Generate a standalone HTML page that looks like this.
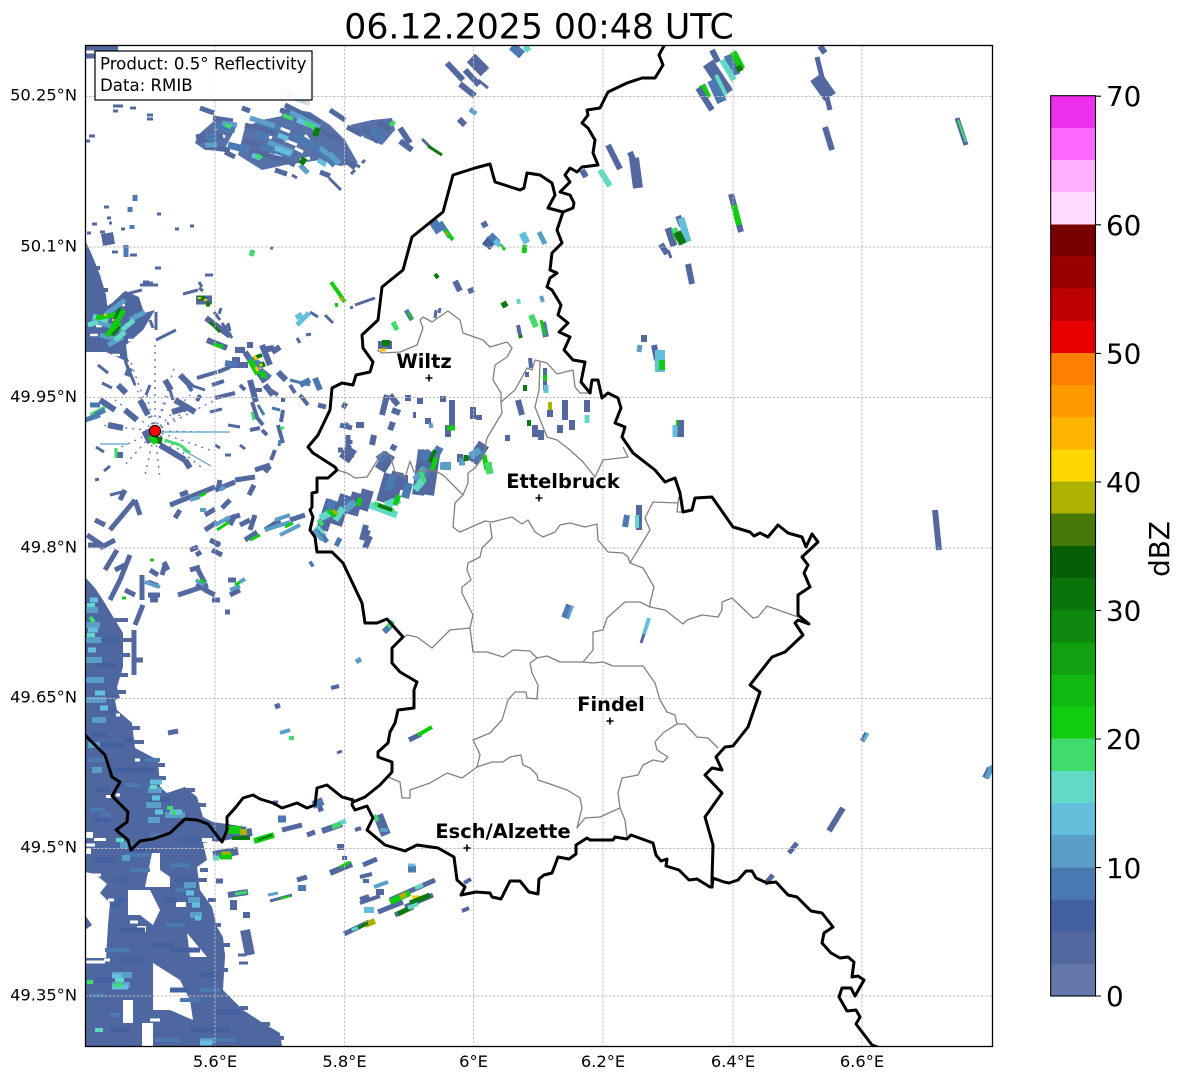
<!DOCTYPE html>
<html><head><meta charset="utf-8"><style>
html,body{margin:0;padding:0;background:#fff}
svg{display:block}
text{font-family:"DejaVu Sans","Liberation Sans",sans-serif;fill:#000}
.r path{fill:none;stroke-linecap:butt}
.a{stroke:#52689f}.b{stroke:#4360a0}.c{stroke:#4b7ab3}.d{stroke:#5b9fc8}.e{stroke:#64bfdc}.f{stroke:#62d9c6}.g{stroke:#3fdb6b}.h{stroke:#11cc11}.i{stroke:#0a7a0a}.y{stroke:#adb200}.z{stroke:#ffc800}.w{stroke:#fff}
</style></head><body>
<svg width="1184" height="1081" viewBox="0 0 1184 1081" xmlns="http://www.w3.org/2000/svg">
<rect width="1184" height="1081" fill="#fff"/>
<text x="539" y="38.5" font-size="34.7" text-anchor="middle">06.12.2025 00:48 UTC</text>
<clipPath id="cp"><rect x="85.5" y="45.5" width="907" height="1001"/></clipPath>
<g clip-path="url(#cp)">
<!-- SW mass -->
<polygon fill="#4f67a0" points="85,577 95,588 103,600 112,615 123,633 123,667 117,687 120,698 115,700 117,710 132,723 135,748 158,760 160,787 167,793 185,787 197,797 203,817 213,822 247,827 240,837 220,840 203,843 207,860 197,867 200,890 212,907 217,927 223,937 225,957 223,990 243,1010 263,1023 280,1033 282,1046 85,1046"/>
<polygon fill="#4f67a0" points="85,240 92,255 100,275 106,295 108,312 85,330"/>
<!-- holes -->
<g fill="#fff">
<polygon points="85,872 95,874 107,884 100,893 110,903 108,925 106,958 85,958 85,930 92,925 85,915"/>
<polygon points="128,890 150,890 160,910 153,925 140,915 128,915"/>
<polygon points="152,853 160,853 160,870 170,877 170,887 145,887"/>
<polygon points="187,933 207,957 190,957"/>
<polygon points="153,963 180,980 190,1000 193,1020 170,1010 153,1010"/>
<rect x="142" y="1023" width="11" height="23"/>
<rect x="123" y="1000" width="10" height="23"/>
<rect x="85" y="832" width="8" height="6"/><rect x="94" y="838" width="12" height="3"/><rect x="85" y="848" width="6" height="6"/>
<rect x="106" y="795" width="8" height="3"/>
<rect x="202" y="838" width="10" height="4"/>
<rect x="176" y="902" width="10" height="5"/><rect x="137" y="926" width="9" height="6"/>
</g>
<g class="r">
<!-- jagged stair edges -->
<path class="a" stroke-width="4" d="M112 620h16M118 640h14M118 655h12M116 675h12M112 692h14M132 728h8M134 742h10M155 765h10M158 778h8M165 796h-10M183 790h12M196 805h10M210 826h20M240 832h12M200 870h8M197 880h10M208 900h8M215 925h6M222 945h8M222 970h6M240 1008h8M260 1024h10M278 1038h6M95 1046h6M92 268h8M100 290h8M102 305h-6"/>
<path class="w" stroke-width="3" d="M85 875h16M85 845h10M108 900h6M150 898h-6M130 922h8M176 925h6M110 960h-6M85 962h20M150 1020h10M120 795h-4M140 760h-5M120 715h-4"/>
<!-- SW texture -->
<path class="b" stroke-width="5" d="M100 745h25M110 770h20M95 790h15M130 770h25M150 800h20M95 860h20M115 880h12M175 880h20M120 930h25M150 945h25M95 980h20M200 975h20M110 1030h20M190 1030h40M215 1012h25M170 950h30M120 960h22M165 900h12M95 820h15M180 840h20M130 850h15M92 735h15M105 710h10M125 740h8M96 665h20M103 640h15M170 990h18M118 900h8M110 905h12"/>
<path class="c" stroke-width="4" d="M88 760h20M100 815h10M145 760h15M90 810h15M125 855h25M150 835h15M165 925h20M200 990h20M180 1000h20M110 1015h10M105 950h25M205 1040h30M170 865h20M175 890h15M150 870h-20M125 785h15M90 995h15M155 1040h25"/>
<path class="d" stroke-width="6" d="M86 610h12M86 625h14M86 640h15M86 660h16M86 680h18M86 700h20M92 720h14M88 745h12M92 770h10M120 845h12M122 858h8M148 790h14M146 805h15M148 820h12M184 885h12M188 900h12M190 915h12M112 975h20M112 985h18M200 1041h14M165 815h20"/>
<path class="e" stroke-width="5" d="M90 600h8M88 630h10M88 650h8M95 693h10M100 708h8M150 782h12M152 798h8M155 812h8M192 905h8M195 918h6M112 987h16M186 893h8M170 812h12M112 976h10M200 1043h12"/>
<path class="f" stroke-width="4" d="M87 605h8M87 635h8M116 840h8M150 787h7M115 980h9M95 1030h8"/>
<path class="g" stroke-width="4" d="M90 617l4 5M167 808h6M114 985h8M172 813h4M87 982h6"/>
</g>
<!-- NW top cluster bases -->
<polygon fill="#5672a8" points="198,135 215,120 236,125 232,135 224,150 205,150 195,143"/>
<polygon fill="#5672a8" points="282,108 310,112 330,125 345,140 358,163 340,166 320,160 285,165 262,170 238,155 245,127 262,120 282,116"/>
<polygon fill="#5672a8" points="350,125 372,120 392,118 395,130 382,145 365,138"/>
<g class="r">
<path class="w" stroke-width="3" d="M262 134l10 4M280 128l10 4M285 140l12 5M295 148l8 4M270 152l12 3M305 135l4 5M345 128l5 3M225 137l-4-2M300 160l10-2M215 128h8"/>
<path class="a" stroke-width="5" d="M85 48h33M85 56h10M200 108l14 5M242 108l8 3M213 118l20 3M196 137l15-3M198 141l25-5M205 147l25 3M225 152l10 5M245 125l30 8M245 140l30 12M250 150l40 12M280 110l40 12M285 105l30 15M310 125l30 15M345 160l10 8M330 110l15 10M347 127l15 8M363 128l15 14M378 122l12 8M285 160l10 5M275 170l12 4M320 172l10 4"/>
<path class="c" stroke-width="7" d="M215 125l20 5M228 145l20 5M260 145l30 10M295 135l25 15M260 122l20 8M320 150l15 15M255 133l14 4M372 130l10 10M205 135l12 5"/>
<path class="d" stroke-width="5" d="M222 123l15 2M250 118l25 8M268 142l25 10M290 112l30 15M320 148l20 15M330 153l8 10M300 165l8 8M205 145h12"/>
<path class="e" stroke-width="5" d="M275 148l16 6M297 120l20 8M278 135l10 4M252 155l8 3M318 160l8 5"/>
<path class="g" stroke-width="4" d="M283 115l10 4M305 122l15 10M225 125l6 2M390 125l5-3M256 155l6 3"/>
<path class="i" stroke-width="6" d="M318 128l-3 8M305 158l-4 6"/>
<path class="a" stroke-width="3" d="M329 178l12 12M276 171l10 4M292 175l5 3M321 172l6 3M352 163l8 4M355 170l-4 4M365 160l-3 3M113 106h10M113 111h5M130 108h6M147 115h6M147 119h6M89 136h6M85 141h5M104 207h5M157 214h4M107 218h4M109 223h3M92 224h5M121 229h4M175 229h4M190 226h4M87 233h4M100 232h5M112 252h6M130 255h7M155 268h6M270 248h3"/>
<path class="c" stroke-width="5" d="M135 195v6M130 207v5M132 225v4M126 245v12"/>
<path class="a" stroke-width="12" d="M102 240l12-2"/>
<path class="g" stroke-width="5" d="M253 250l-2 6"/>
</g>
<!-- W cluster -->
<polygon fill="#4f67a0" points="85,320 112,303 125,291 139,297 144,313 155,310 143,330 126,345 128,362 106,352 85,352"/>
<g class="r">
<path class="w" stroke-width="2.5" d="M90 335h8M112 355h8M128 340h5M100 345h6M135 315h4M96 326h6M122 305h3M108 300h3"/>
<path class="a" stroke-width="3" d="M122 295l20-5M140 285h18M143 282h6M127 365l8 20M98 365l10 8M150 320l3 8M156 312v18M102 383l10 5M90 345h20M120 350l8 12M125 360l5 15M156 340l20-10"/>
<path class="d" stroke-width="5" d="M92 320l30 10M100 335l20 5M125 300l-20 15M130 320l15-8M108 345l15-8"/>
<path class="f" stroke-width="5" d="M93 316l15 5M122 330l12-10M115 340l10-8M88 325l10-3"/>
<path class="h" stroke-width="5" d="M96 318l24-4M110 332l14-22M120 322l-14 14"/>
<path class="i" stroke-width="3" d="M115 318l5-10M112 335l8-8"/>
<path class="z" stroke-width="2" d="M104 315h3M112 320h2"/>
<!-- spots NW -->
<path class="a" stroke-width="3" d="M183 294l15-4M145 283h8M205 275h8M202 287l-3-5M221 308l-2 6M228 323l2 8M222 323l10 15M228 325l-4 5M199 288l4 3M214 312l6 8M297 338l3 5M306 335l5-1M355 305l20-7M325 315l8 8M310 312l8 5M350 308l3-1"/>
<path class="a" stroke-width="9" d="M196 300h16"/>
<path class="i" stroke-width="5" d="M198 298h7M206 304h4"/>
<path class="z" stroke-width="2" d="M198 298h3M204 300h3"/>
<path class="a" stroke-width="6" d="M206 318l24 18M207 340l20 8M235 350h10M262 350l12-2M247 345h6"/>
<path class="i" stroke-width="3" d="M210 322l10 10"/>
<path class="h" stroke-width="4" d="M331 282l14 20M213 344l10 3M335 305h3"/>
<path class="y" stroke-width="3" d="M340 297l3 4"/>
<path class="e" stroke-width="5" d="M297 325l12-12M296 318l6-4"/>
<path class="g" stroke-width="5" d="M393 322l4 8"/>
<path class="a" stroke-width="8" d="M378 345h14"/>
<path class="i" stroke-width="6" d="M382 343h8"/>
<path class="z" stroke-width="3" d="M380 350h6"/>
<!-- centre-left cluster -->
<path class="a" stroke-width="6" d="M228 365l20 0M245 352l20 30M262 345l8 20M250 380l6 22M265 385l8 10M278 372l8 8M232 360l8 0M272 352l8-5"/>
<path class="c" stroke-width="6" d="M248 358l15 8M260 370l10 8M225 363l12 2M300 385l10-5M315 378l5 12"/>
<path class="h" stroke-width="6" d="M250 360l8 14M262 372l2 6"/>
<path class="i" stroke-width="4" d="M254 358l8-3M262 362l2 5"/>
<path class="z" stroke-width="3" d="M254 356l3 4M260 364l2 2M256 367l2 4"/>
<path class="a" stroke-width="4" d="M212 385l12-4M250 390l12 0M270 390l8 5M240 385l5 5M252 402l5 15M255 415l8 10M283 410l-2 12M278 425l5 18M262 430l5 5M290 385l5 8M300 395l8 10M285 400h-4M275 450l-4 10M250 430l10-2M215 398l20-5M200 395l-3 6M197 378l20-6M218 372l12-5M188 385l4 6"/>
<path class="c" stroke-width="3" d="M290 380l20 5M258 405l6 10M280 440l-1 6M272 408l8 2"/>
<path class="g" stroke-width="3" d="M280 428h4M252 412l2 8"/>
<!-- zone left of band -->
<path class="a" stroke-width="5" d="M343 408l3-5M340 425l12 3M348 435v14M345 450h3M350 445l-3 4M348 455h6M343 450h-5M318 405l8 2M350 440v4"/>
<path class="c" stroke-width="4" d="M345 428l3-5M342 452l8 3"/>
<!-- right cells -->
<path class="a" stroke-width="6" d="M390 395l8 10M392 410l8 3M405 398h6M420 398v6M413 415h3M443 396v6M452 400v30M448 425v12M428 418v6M473 407v12M479 415v5M518 400l4 15M565 400v20M560 425v8M572 420v10M587 400v12M550 410v7M505 438h5M535 425v12M541 430v10"/>
<path class="a" stroke-width="6" d="M447 63l16 17M465 70l14 15M460 84l15 12M400 128l10 15M400 141l12 9M608 145l12 24M582 170l4 7M630 152l4 10M731 194l10 38M661 244l6 10M678 216l4 10M688 264l4 20M825 127l7 23M820 46l5 7M455 281l5 10M470 288l2 5M644 335v7M654 345l3 15M483 222l3 5"/>
<path class="a" stroke-width="12" d="M471 58l14 14"/>
<path class="a" stroke-width="3" d="M478 80l10 8M422 139l10 10M668 250l3 8M436 310l-1 8M440 308l-1 5"/>
<path class="a" stroke-width="14" d="M816 77l14 20"/>
<path class="a" stroke-width="5" d="M817 57l13 53"/>
<path class="a" stroke-width="10" d="M634 158l4 30"/>
<path class="i" stroke-width="3" d="M428 146l14 9"/>
<path class="d" stroke-width="5" d="M470 109l6 5M429 426l4-1M539 232l6 12"/>
<path class="a" stroke-width="6" d="M459 119l6 6"/>
<path class="c" stroke-width="9" d="M512 46l10 9M432 220l8 12M728 55l8 20"/>
<path class="f" stroke-width="6" d="M525 46l4 5M600 170l10 16M722 60l12 20"/>
<path class="h" stroke-width="7" d="M733 52l9 17M702 85l6 13"/>
<path class="a" stroke-width="6" d="M712 50l6 12M698 88l14 22"/>
<path class="a" stroke-width="12" d="M708 63l20 30"/>
<path class="c" stroke-width="10" d="M712 80l10 22"/>
<path class="f" stroke-width="4" d="M716 75l10 20"/>
<path class="i" stroke-width="6" d="M738 66l3 5"/>
<path class="h" stroke-width="6" d="M734 205l5 20"/>
<path class="e" stroke-width="7" d="M681 218l7 24"/>
<path class="a" stroke-width="7" d="M668 228l6 18"/>
<path class="g" stroke-width="6" d="M674 228l4 12"/>
<path class="i" stroke-width="8" d="M677 232l6 12"/>
<path class="c" stroke-width="5" d="M440 222l10 15"/>
<path class="h" stroke-width="4" d="M445 230l8 10"/>
<path class="y" stroke-width="2" d="M446 232l2 3"/>
<path class="b" stroke-width="10" d="M485 240l8 6"/>
<path class="c" stroke-width="7" d="M490 235l8 8"/>
<path class="e" stroke-width="5" d="M495 240l5 6"/>
<path class="h" stroke-width="3" d="M501 245l4 5"/>
<path class="e" stroke-width="7" d="M522 233l5 10"/>
<path class="h" stroke-width="5" d="M525 245l-1 8"/>
<path class="i" stroke-width="4" d="M435 274l3 4"/>
<path class="i" stroke-width="6" d="M503 302l3 5"/>
<path class="f" stroke-width="4" d="M518 299l1 5"/>
<path class="d" stroke-width="4" d="M541 296l2 6"/>
<path class="g" stroke-width="6" d="M531 315l5 12"/>
<path class="c" stroke-width="6" d="M543 322l3 15"/>
<path class="h" stroke-width="3" d="M541 320l4 15"/>
<path class="a" stroke-width="4" d="M518 325l2 10"/>
<path class="i" stroke-width="4" d="M520 335l1 3M529 420v6M525 385v6"/>
<path class="c" stroke-width="5" d="M406 310l6 10"/>
<path class="h" stroke-width="2" d="M408 312l4 8"/>
<path class="d" stroke-width="5" d="M640 345l-1 7"/>
<path class="e" stroke-width="10" d="M660 350v22"/>
<path class="h" stroke-width="6" d="M662 360v10"/>
<path class="a" stroke-width="8" d="M680 420v17"/>
<path class="e" stroke-width="5" d="M675 425v12"/>
<path class="h" stroke-width="2" d="M677 420v6"/>
<path class="h" stroke-width="5" d="M447 428h8"/>
<path class="y" stroke-width="4" d="M550 402v8"/>
<path class="f" stroke-width="5" d="M587 415v8"/>
<path class="a" stroke-width="4" d="M545 368v22M530 358l1 10M527 372v5"/>
<path class="h" stroke-width="4" d="M545 375v6"/>
<path class="e" stroke-width="5" d="M546 385v8"/>
<!-- central band -->
<path class="a" stroke-width="12" d="M322 530l10-30M336 525l10-30M352 515l6-22M362 510l6-20M382 502l8-28M392 500l6-28M402 490l0-15M418 495l6-45M428 495l6-40M344 460l8-12M380 470l10-16M472 462l12-18M420 470l12-18"/>
<path class="a" stroke-width="6" d="M365 548l5-12M356 425l8 0M372 445l2-10M382 415l5-20M382 458l6-5M395 445l-3 5M390 430l3-8M460 462v-8M362 540l4-15M368 530l-3 8"/>
<path class="c" stroke-width="8" d="M325 520l8-20M342 512l8-12M388 490l6-15M405 498l4-15M420 485l8-18M432 462l8-15M423 460l3-10M475 460l8-10M378 460l8-6"/>
<path class="d" stroke-width="7" d="M345 510l10-8M384 510l10-10M415 480l10-12M470 456l10-6M440 466h10M459 462h6"/>
<path class="f" stroke-width="7" d="M320 518l10-5M335 520l8-12M370 505l27 10M385 505l15-5M415 490l8-10M316 527l8 10"/>
<path class="g" stroke-width="4" d="M374 503l20 8M420 470l5 12M318 520l5 5"/>
<path class="i" stroke-width="4" d="M378 505l14 5M430 462l5-12"/>
<path class="h" stroke-width="5" d="M328 510l8 6M360 498l-2 8M395 505l4-10M432 470l4-12M484 455l3 15"/>
<path class="y" stroke-width="3" d="M333 510l4 4"/>
<path class="d" stroke-width="8" d="M441 466h10"/>
<path class="i" stroke-width="5" d="M466 455v6"/>
<path class="g" stroke-width="7" d="M488 462l2 12"/>
<path class="c" stroke-width="5" d="M315 530l10 10M322 535l5 7M340 538l-4 8"/>
<path class="d" stroke-width="4" d="M314 530l8 10"/>
<!-- scatter bands -->
<path class="a" stroke-width="5" d="M170 505l20-8M190 497l25-10M215 490l20-8M235 480l20-3M255 470l15-5M205 515l10-6M225 520l15-5M240 525l10-5M250 530l5-15M265 530l15-10M290 520l15-5M205 530l12-8M210 540l10 5M235 515l-5 10M230 500l-8 8M220 480l-2 10M254 485l-5 10M180 510l-5 8M245 540l12-8M212 550l10 5M180 495l8-3M265 472l5-6"/>
<path class="d" stroke-width="4" d="M190 500l10-3M215 525l15-8M265 530l25-8M280 535l20-10M275 520l15-5M200 510h6M220 490l5-3"/>
<path class="h" stroke-width="3" d="M217 530l12-8M250 540l10-5M200 496l6-3M285 527l8-4"/>
<path class="a" stroke-width="5" d="M100 548l15-8M110 530l25-30M105 570l12-20M120 580l10-25M135 500l5 15M125 490l-5 10M87 535l15 10M95 520l10 5M110 600l10-20M88 545h12M115 570l10-5"/>
<path class="a" stroke-width="5" d="M135 625l8-20M142 600v-25M148 582l10 4M150 570l8 5M148 595h12M165 565l-3 10M178 595l30-10M205 590l10 5M196 585l12 6M190 570l10-3M197 568l8 15M230 595l10-5M228 580h8M143 660h-8M134 630v45M125 590l10 5M150 600h8M225 612h5M212 600h8"/>
<path class="d" stroke-width="4" d="M145 582l15 5M196 580l8 5M240 582l5-3M230 590l10-4"/>
<path class="h" stroke-width="3" d="M150 560h4M122 598h4M200 580l5 2M235 585l5-3"/>
<path class="a" stroke-width="5" d="M164 562l4 8M215 545l5-2M190 550l8-3M196 555l5-3"/>
<path class="c" stroke-width="6" d="M384 632l8-8M310 565l3-2"/>
<path class="g" stroke-width="5" d="M388 627l5-6"/>
<path class="d" stroke-width="5" d="M356 662l5-3"/>
<path class="a" stroke-width="4" d="M331 688l8-2"/>
<!-- S fragments -->
<path class="a" stroke-width="8" d="M214 838l38-6"/>
<path class="h" stroke-width="8" d="M226 830h15"/>
<path class="y" stroke-width="6" d="M240 832h7"/>
<path class="i" stroke-width="4" d="M232 838h18"/>
<path class="h" stroke-width="6" d="M254 841l20-6"/>
<path class="i" stroke-width="2" d="M258 840l14-5"/>
<path class="a" stroke-width="8" d="M213 855l25-4"/>
<path class="h" stroke-width="7" d="M220 856h12"/>
<path class="y" stroke-width="3" d="M222 853h8"/>
<path class="f" stroke-width="5" d="M213 858h6"/>
<path class="a" stroke-width="5" d="M282 830l20-5M307 835l8-3"/>
<path class="c" stroke-width="7" d="M278 819h8"/>
<path class="a" stroke-width="6" d="M322 831l20-7M337 847h7M330 873l22-9"/>
<path class="g" stroke-width="5" d="M332 827l8-3"/>
<path class="f" stroke-width="5" d="M340 823l6-2"/>
<path class="a" stroke-width="4" d="M355 830l6-2M342 858h5"/>
<path class="h" stroke-width="3" d="M340 867l10-5"/>
<path class="a" stroke-width="5" d="M363 865l14-6M378 912l25-10"/>
<path class="a" stroke-width="4" d="M360 877l12-3M363 881h6M360 903l20-7M360 899l9-3"/>
<path class="d" stroke-width="4" d="M374 887l14-5"/>
<path class="a" stroke-width="6" d="M376 892h8"/>
<path class="c" stroke-width="7" d="M408 869h8"/>
<path class="e" stroke-width="3" d="M408 865h7"/>
<path class="e" stroke-width="6" d="M364 910h10"/>
<path class="a" stroke-width="5" d="M344 934l25-12"/>
<path class="y" stroke-width="6" d="M365 925l10-4"/>
<path class="f" stroke-width="3" d="M352 930l10-4"/>
<path class="i" stroke-width="3" d="M358 928l10-5"/>
<path class="a" stroke-width="5" d="M390 900l45-20M405 907l28-12M395 915l18-8"/>
<path class="h" stroke-width="6" d="M390 902l20-9"/>
<path class="y" stroke-width="5" d="M400 897l6-3"/>
<path class="z" stroke-width="3" d="M412 897h8"/>
<path class="i" stroke-width="5" d="M410 903l20-8M398 914l12-6"/>
<path class="f" stroke-width="4" d="M408 908l10-4M415 888l8-3"/>
<path class="a" stroke-width="4" d="M462 911l7-3M464 883l7-4"/>
<path class="a" stroke-width="5" d="M297 880l10-3"/>
<path class="c" stroke-width="8" d="M302 885v6"/>
<path class="d" stroke-width="3" d="M268 895l10-2"/>
<path class="a" stroke-width="3" d="M270 901l22-6"/>
<path class="h" stroke-width="2" d="M280 899l10-3"/>
<path class="a" stroke-width="6" d="M228 895l20-3M243 915h7"/>
<path class="g" stroke-width="3" d="M235 894l12-2"/>
<path class="a" stroke-width="10" d="M230 905h7M245 930l5 25"/>
<path class="a" stroke-width="3" d="M238 955h8M239 963h9"/>
<path class="a" stroke-width="5" d="M216 881h7M207 955h18M168 733l10-2M275 707l5-2"/>
<path class="d" stroke-width="4" d="M280 733l10-3"/>
<path class="g" stroke-width="4" d="M289 738h5"/>
<path class="a" stroke-width="3" d="M337 753l5-2"/>
<path class="a" stroke-width="5" d="M409 740l12-6"/>
<path class="h" stroke-width="4" d="M418 735l14-8"/>
<path class="a" stroke-width="10" d="M378 815l8 20"/>
<path class="g" stroke-width="4" d="M374 815l4 6"/>
<path class="d" stroke-width="4" d="M380 830h8"/>
<path class="c" stroke-width="8" d="M313 805l10-4"/>
<path class="a" stroke-width="5" d="M318 810l5-2M273 803h5"/>
<!-- E -->
<path class="c" stroke-width="6" d="M627 515l-2 12"/>
<path class="a" stroke-width="6" d="M639 505v25"/>
<path class="f" stroke-width="4" d="M637 515v13"/>
<path class="c" stroke-width="8" d="M565 618l5-13"/>
<path class="d" stroke-width="3" d="M568 618l4-12"/>
<path class="e" stroke-width="4" d="M649 618l-5 16"/>
<path class="a" stroke-width="3" d="M644 634l-3 9"/>
<path class="a" stroke-width="5" d="M789 853l8-10M765 884l8-9"/>
<path class="a" stroke-width="6" d="M829 831l14-23M935 510l4 40M985 778l5-10"/>
<path class="d" stroke-width="5" d="M987 778l5-12"/>
<path class="c" stroke-width="5" d="M862 741l5-8"/>
<path class="e" stroke-width="2" d="M864 740l4-7"/>
<path class="a" stroke-width="5" d="M957 118l9 27"/>
<path class="g" stroke-width="2" d="M958 120l8 22"/>
<!-- radial spokes -->
<g stroke="#52689f" stroke-width="1.5" stroke-dasharray="2 5" opacity=".85">
<path d="M155 431L155 340M155 431L130 360M155 431L175 365M155 431L215 400M155 431L115 400M155 431L100 425M155 431L205 432M155 431L205 470M155 431L185 462M155 431L160 480M155 431L145 475M155 431L125 465M155 431L135 385M155 431L147 395M155 431L172 385M155 431L195 405M155 431L115 450M155 431L210 450M155 431L190 395"/>
</g>
<path class="d" stroke-width="1.2" d="M160 432L230 432M183 450l28 16M100 444h28"/>
<path class="a" stroke-width="6" d="M160 445l25 15M175 400l20 12M140 400l8 15M125 410l12 10M108 425l15 3M172 412l14-4M100 400l15 10M118 385l8 8M130 368l-3 8M180 375l12 12M165 380l6 10M185 460l5 8M115 455h8"/>
<path class="a" stroke-width="3" d="M190 385l15 5M170 390l3 10M150 385l-4 10M120 390h4M96 447l8 5M104 471l6-5M95 480l4-1M110 495l12-3M210 412l12-3M240 445l5 4M228 425l12 2M215 445l5 3M225 455h6"/>
<path class="g" stroke-width="3" d="M90 415l15-8M116 448v10M165 440l15 5M180 445l10 8"/>
<path class="c" stroke-width="5" d="M85 420l15-5M90 405h10M95 415l10-5"/>
<path class="i" stroke-width="7" d="M150 438l12 3"/>
<path class="a" stroke-width="10" d="M146 430l6 12"/>
<path class="h" stroke-width="6" d="M150 436l6 7"/>
<path stroke="#52689f" stroke-width="8" d="M280 92l30 10" opacity=".25"/>
<path stroke="#62d9c6" stroke-width="5" d="M285 95l20 6" opacity=".3"/>
</g>
<!-- grid -->
<g stroke="#bdbdbd" stroke-width=".9" stroke-dasharray="2.5 1.5">
<path d="M215 45V1046M344.5 45V1046M473.5 45V1046M603 45V1046M733 45V1046M862 45V1046M85 96.5H992M85 247H992M85 397.5H992M85 548H992M85 698.5H992M85 848.5H992M85 996H992"/>
</g>
<!-- admin -->
<g fill="none" stroke="#808080" stroke-width="1.3" stroke-linejoin="round">
<path d="M337 470L347 473 355 478 367 477 382 453 390 455 395 472 405 478 410 461 414 472 433 470 443 475 463 495 455 503 453 527 458 531 460 532 485 521 492 522 512 517 522 524 528 520 535 532 543 537 555 532 560 525 570 523 585 527 597 524 598 540 608 552 623 553 628 557 630 563 643 568 650 580 654 587 650 603 650 607"/>
<path d="M630 563L650 530 645 518 653 502 678 503 677 512 683 512M679 497L678 503"/>
<path d="M490 523L492 538 482 548 480 557 468 563 467 570 471 580 462 587 462 593 473 615 470 628 473 652 487 652 503 657 513 650 530 651 537 658 547 656 560 662 583 662 593 663 603 662 613 666 643 666 655 683 660 700 667 712 675 715 677 724 685 724 697 737 708 738 718 748"/>
<path d="M470 628L450 630 432 648 417 637 407 635 400 640"/>
<path d="M583 662L593 650 593 632 603 630 607 618 625 602 640 602 650 607 665 610 683 624 687 620 702 615 718 617 722 610 722 602 732 598 753 618 758 617 767 606 798 617"/>
<path d="M537 658L530 663 532 673 538 685 537 699 527 698 526 692 515 692 508 700 502 720 490 733 473 740 478 750 480 755 477 767 492 762 503 762 510 757 521 755 523 765 530 768 537 775 538 780 547 783 567 790 580 798 582 808 577 828 585 818 600 817 620 808 625 820 627 837"/>
<path d="M620 808L618 793 622 778 638 775 643 765 653 760 663 762 668 757 657 750 655 742 663 733 677 724"/>
<path d="M388 777L400 782 402 798 410 798 410 790 430 783 447 773 462 778 477 767"/>
<path d="M377 350L382 353 400 352 417 345 423 328 420 320 423 317 432 322 448 311 460 320 463 333 483 340 490 347 507 342 512 348 507 357 495 365 493 380 501 393 501 402 515 390 527 368 532 370 535 360 547 363 557 374 573 370 575 387 580 393 592 393"/>
<path d="M501 402L502 413 487 438 483 457 475 468 468 473 468 483 463 495"/>
<path d="M540 362L539 390 535 407 547 437 557 440 570 450 583 462 595 477 603 460 628 457 623 447"/>
</g>
<!-- black borders -->
<g fill="none" stroke="#000" stroke-width="3" stroke-linejoin="round" stroke-linecap="round">
<path d="M85 735L105 755 112 777 120 782 112 796 128 812 127 822 116 830 128 840 131 850 140 841 153 839 170 833 185 819 197 820 208 824 222 842 227 830 227 817 236 807 243 798 253 795 260 799 273 803 282 808 297 803 307 808 315 805 317 788 327 785 342 797 353 800 352 805 355 810 367 806 373 818 367 830 385 845 405 851 417 845 438 848 454 857 457 880 465 887 461 895 476 892 490 893 492 897 501 899 510 881 520 881 529 892 538 894 539 879 544 875 552 873 558 857 569 859 576 854 576 845 587 838 590 840 613 840 615 837 627 839 631 835 653 843 656 855 661 861 667 859 666 866 679 870 689 880 697 879 710 887 712 887"/>
<path d="M712 887L713 878 724 882 729 883 738 880 746 871 752 871 756 878 767 883 776 882 788 895 797 897 811 911 822 913 833 927 824 933 822 943 831 953 840 958 848 957 854 962 852 977 858 976 864 980 855 996 851 988 842 988 839 997 847 1011 856 1010 860 1017 856 1024 872 1045 880 1048"/>
<path d="M712 887V880L713 845 705 817 722 793 705 775 712 768 722 770 716 757 725 747 733 746 748 727 760 692 750 685 772 657 785 652 803 635 795 623 798 620 809 624 798 615 798 595 810 587 804 573 808 565 802 557 818 542 812 534 806 547 802 537 788 533 778 525 768 537 760 533 754 536 750 532 733 527 712 497 695 498 692 510 683 512 680 493 675 478 665 482 655 470 633 453 622 437 625 427 615 423 621 408 618 398 608 393 602 398 598 380 592 380 590 393 581 382 585 362 573 360 564 350 570 337 559 332 568 323 558 315 561 305 552 290 547 287 550 278 557 273 550 270 552 253 562 243 557 230 563 212"/>
<path d="M563 212L573 208 574 203 570 195 560 192 570 182 565 175 570 168 577 172 582 167 598 165 593 153 595 140 588 128 582 123 588 115 587 110 600 108 608 92 627 83 642 78 655 78 663 65 659 55 665 44"/>
<path d="M563 212L548 208 555 195 552 183 540 175 527 173 524 188 520 190 495 182 490 164 475 168 453 175 443 212 412 237 403 270 382 287 378 320 362 335 363 348 373 362 370 372 356 375 353 385 342 383 332 388 330 410 318 435 308 447 313 453 335 467 337 470 328 478 317 478 317 492 312 493 312 507 310 510 313 517 310 530 315 537 317 552 332 552 343 563 362 603 365 623 377 623 387 619 403 637 392 648 392 663 400 672 417 682 414 690 414 708 398 710 395 723 390 732 388 743 378 752 378 757 392 762 392 772 380 785 365 797 353 802"/>
</g>
<!-- station -->
<circle cx="155" cy="431" r="5.6" fill="#f00" stroke="#000" stroke-width="1"/>
</g>
<rect x="85.5" y="45.5" width="907" height="1001" fill="none" stroke="#000" stroke-width="1.3"/>
<!-- legend -->
<rect x="95" y="51" width="217" height="49" fill="#fff" fill-opacity=".88" stroke="#000" stroke-width="1.2"/>
<text x="100" y="69.5" font-size="16.6">Product: 0.5° Reflectivity</text>
<text x="100" y="91" font-size="16.6">Data: RMIB</text>
<!-- cities -->
<g font-size="19.44" font-weight="700" text-anchor="middle">
<text x="424" y="368">Wiltz</text><text x="563" y="488">Ettelbruck</text><text x="611" y="711">Findel</text><text x="503" y="838">Esch/Alzette</text>
</g>
<g stroke="#000" stroke-width="1.6" fill="none">
<path d="M425.5 378h7M429 374.5v7M535.5 498h7M539 494.5v7M606.5 721h7M610 717.5v7M463.5 848h7M467 844.5v7"/>
</g>
<!-- ticks -->
<g font-size="16.3" text-anchor="middle">
<text x="215" y="1067">5.6°E</text><text x="344.5" y="1067">5.8°E</text><text x="473.5" y="1067">6°E</text><text x="603" y="1067">6.2°E</text><text x="733" y="1067">6.4°E</text><text x="862" y="1067">6.6°E</text>
</g>
<g font-size="16.3" text-anchor="end">
<text x="77" y="100.5">50.25°N</text><text x="77" y="251.5">50.1°N</text><text x="77" y="402">49.95°N</text><text x="77" y="552.5">49.8°N</text><text x="77" y="702.5">49.65°N</text><text x="77" y="852.5">49.5°N</text><text x="77" y="1000.5">49.35°N</text>
</g>
<!-- colorbar -->
<g shape-rendering="crispEdges">
<rect x="1051" y="95.7" width="44.5" height="33" fill="#ee30ee"/><rect x="1051" y="127.85" width="44.5" height="33" fill="#ff66ff"/><rect x="1051" y="160" width="44.5" height="33" fill="#ffb1ff"/><rect x="1051" y="192.15" width="44.5" height="33" fill="#ffdcff"/><rect x="1051" y="224.3" width="44.5" height="33" fill="#7a0000"/><rect x="1051" y="256.45" width="44.5" height="33" fill="#990000"/><rect x="1051" y="288.6" width="44.5" height="33" fill="#bf0000"/><rect x="1051" y="320.75" width="44.5" height="33" fill="#e60000"/><rect x="1051" y="352.9" width="44.5" height="33" fill="#ff7f00"/><rect x="1051" y="385.05" width="44.5" height="33" fill="#ff9900"/><rect x="1051" y="417.2" width="44.5" height="33" fill="#ffb400"/><rect x="1051" y="449.35" width="44.5" height="33" fill="#ffd700"/><rect x="1051" y="481.5" width="44.5" height="33" fill="#adb200"/><rect x="1051" y="513.65" width="44.5" height="33" fill="#47780a"/><rect x="1051" y="545.8" width="44.5" height="33" fill="#065f06"/><rect x="1051" y="577.95" width="44.5" height="33" fill="#0a740a"/><rect x="1051" y="610.1" width="44.5" height="33" fill="#0d880d"/><rect x="1051" y="642.25" width="44.5" height="33" fill="#10a010"/><rect x="1051" y="674.4" width="44.5" height="33" fill="#10b810"/><rect x="1051" y="706.55" width="44.5" height="33" fill="#11cc11"/><rect x="1051" y="738.7" width="44.5" height="33" fill="#3fdb6b"/><rect x="1051" y="770.85" width="44.5" height="33" fill="#62d9c6"/><rect x="1051" y="803" width="44.5" height="33" fill="#64bfdc"/><rect x="1051" y="835.15" width="44.5" height="33" fill="#5b9fc8"/><rect x="1051" y="867.3" width="44.5" height="33" fill="#4b7ab3"/><rect x="1051" y="899.45" width="44.5" height="33" fill="#4360a0"/><rect x="1051" y="931.6" width="44.5" height="33" fill="#52689f"/><rect x="1051" y="963.75" width="44.5" height="32.2" fill="#6477a8"/>
</g>
<rect x="1050.7" y="95.7" width="44.8" height="900.3" fill="none" stroke="#000" stroke-width="1.1"/>
<path stroke="#000" stroke-width="1.1" d="M1095.5 96.2h5.5M1095.5 224.8h5.5M1095.5 353.4h5.5M1095.5 481.9h5.5M1095.5 610.5h5.5M1095.5 739h5.5M1095.5 867.6h5.5M1095.5 996h5.5"/>
<g font-size="27.8">
<text x="1106" y="106">70</text><text x="1106" y="235">60</text><text x="1106" y="363.5">50</text><text x="1106" y="492">40</text><text x="1106" y="620.6">30</text><text x="1106" y="749">20</text><text x="1106" y="878">10</text><text x="1106" y="1006">0</text>
</g>
<text transform="translate(1169 549) rotate(-90)" font-size="27.8" text-anchor="middle">dBZ</text>
</svg>
</body></html>
